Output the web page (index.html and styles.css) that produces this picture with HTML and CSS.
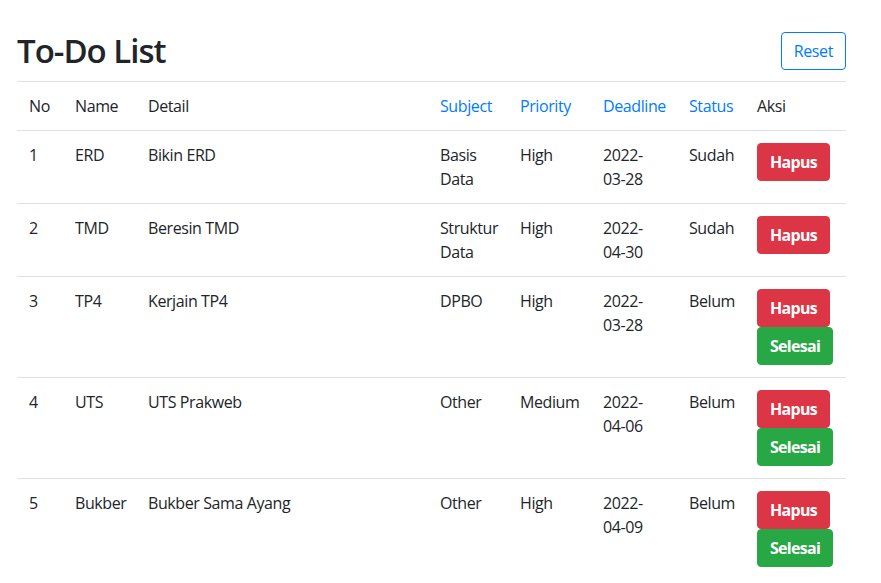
FILE: index.html
```html
<!DOCTYPE html>
<html lang="id">
<head>
<meta charset="utf-8">
<title>To-Do List</title>
<link rel="stylesheet" href="styles.css">
</head>
<body>
<div class="page">
  <div class="header">
    <h1 class="title">To-Do List</h1>
    <button class="btn btn-outline">Reset</button>
  </div>
  <table class="table">
    <colgroup>
      <col class="c-no"><col class="c-name"><col class="c-detail"><col class="c-subject"><col class="c-priority"><col class="c-deadline"><col class="c-status"><col class="c-aksi">
    </colgroup>
    <thead>
      <tr>
        <th>No</th><th>Name</th><th>Detail</th>
        <th><a class="link">Subject</a></th>
        <th><a class="link">Priority</a></th>
        <th><a class="link">Deadline</a></th>
        <th><a class="link">Status</a></th>
        <th>Aksi</th>
      </tr>
    </thead>
    <tbody>
      <tr>
        <td>1</td><td>ERD</td><td>Bikin ERD</td><td>Basis Data</td><td>High</td><td>2022-<span class="nw">03-28</span></td><td>Sudah</td>
        <td><button class="btn btn-danger">Hapus</button></td>
      </tr>
      <tr>
        <td>2</td><td>TMD</td><td>Beresin TMD</td><td>Struktur Data</td><td>High</td><td>2022-<span class="nw">04-30</span></td><td>Sudah</td>
        <td><button class="btn btn-danger">Hapus</button></td>
      </tr>
      <tr>
        <td>3</td><td>TP4</td><td>Kerjain TP4</td><td>DPBO</td><td>High</td><td>2022-<span class="nw">03-28</span></td><td>Belum</td>
        <td><button class="btn btn-danger">Hapus</button><button class="btn btn-success">Selesai</button></td>
      </tr>
      <tr>
        <td>4</td><td>UTS</td><td>UTS Prakweb</td><td>Other</td><td>Medium</td><td>2022-<span class="nw">04-06</span></td><td>Belum</td>
        <td><button class="btn btn-danger">Hapus</button><button class="btn btn-success">Selesai</button></td>
      </tr>
      <tr>
        <td>5</td><td>Bukber</td><td>Bukber Sama Ayang</td><td>Other</td><td>High</td><td>2022-<span class="nw">04-09</span></td><td>Belum</td>
        <td><button class="btn btn-danger">Hapus</button><button class="btn btn-success">Selesai</button></td>
      </tr>
    </tbody>
  </table>
</div>
</body>
</html>
```

FILE: styles.css
```css
* { box-sizing: border-box; }
html, body { margin: 0; padding: 0; background: #fff; }
body {
  font-family: "Open Sans", "Noto Sans", sans-serif;
  font-size: 16px;
  line-height: 1.5;
  color: #212529;
}
.page {
  width: 829px;
  margin-left: 17px;
  padding-top: 20px;
}
.header {
  height: 61px;
  display: flex;
  align-items: center;
  justify-content: space-between;
}
.title {
  margin: 0;
  font-size: 33px;
  font-weight: 600;
  line-height: 1.2;
  letter-spacing: -1px;
}
.table {
  width: 829px;
  border-collapse: collapse;
  table-layout: fixed;
}
.c-no { width: 46px; }
.c-name { width: 73px; }
.c-detail { width: 292px; }
.c-subject { width: 80px; }
.c-priority { width: 83px; }
.c-deadline { width: 86px; }
.c-status { width: 68px; }
.c-aksi { width: 101px; }
.table th, .table td {
  padding: 12px;
  border-top: 1px solid #dee2e6;
  vertical-align: top;
  text-align: left;
  font-weight: 400;
  letter-spacing: -0.4px;
}
.nw { white-space: nowrap; }
.link { color: #007bff; text-decoration: none; }
.btn {
  display: inline-block;
  font-family: inherit;
  font-size: 16px;
  line-height: 24px;
  padding: 6px 12px;
  border: 1px solid transparent;
  border-radius: 4px;
  cursor: pointer;
  vertical-align: middle;
}
.btn-outline {
  color: #007bff;
  background: #fff;
  border-color: #007bff;
  font-weight: 400;
  padding: 6px 12px;
  letter-spacing: -0.4px;
}
.btn-danger, .btn-success {
  color: #fff;
  font-weight: 700;
  letter-spacing: -0.7px;
}
.btn-danger { background: #dc3545; border-color: #dc3545; }
.btn-success { background: #28a745; border-color: #28a745; }
```
